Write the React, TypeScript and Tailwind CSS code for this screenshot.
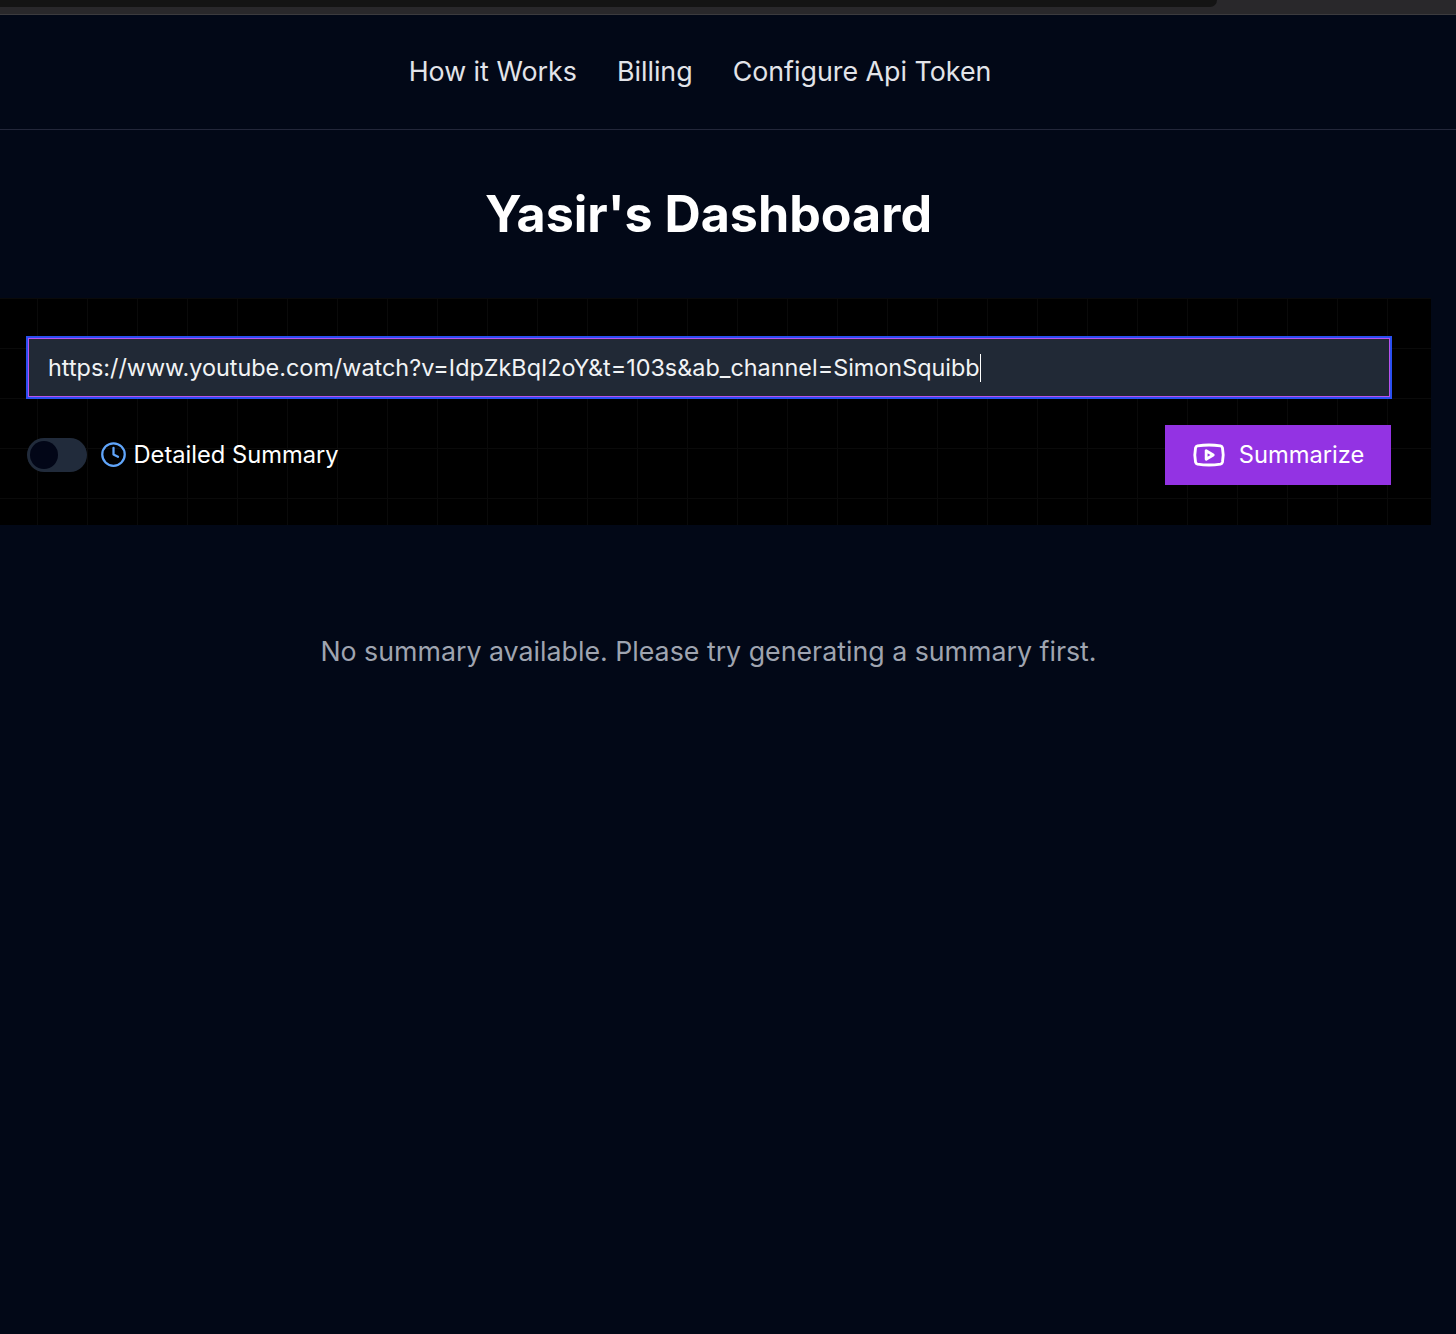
import { Clock, Youtube } from "lucide-react";

const navLinks = ["How it Works", "Billing", "Configure Api Token"];

function BrowserEdge() {
  return (
    <div className="h-[15px] bg-[#29282b] border-b border-[#3c3b3e]">
      <div className="h-[7px] w-[1217px] bg-[#141414] rounded-br-lg" />
    </div>
  );
}

function Nav() {
  return (
    <nav className="h-[115px] pb-px border-b border-[#23273a]">
      <ul className="w-[1400px] h-full flex items-center justify-center gap-[40px] text-[26.8px] text-[#e2e4e9]">
        {navLinks.map((link) => (
          <li key={link}>{link}</li>
        ))}
      </ul>
    </nav>
  );
}

function SummaryForm() {
  return (
    <section className="w-[1431px] h-[227px] bg-black bg-[linear-gradient(to_right,#0a0a0a_1px,transparent_1px),linear-gradient(to_bottom,#0a0a0a_1px,transparent_1px)] bg-[size:50px_50px] bg-[position:37px_0px] pl-[26px] pt-[38px]">
      <div className="w-[1366px] h-[63px] border-2 border-[#2a4ff0] bg-[#212936]">
        <div className="h-full border border-[#b851f0] pl-[19px] flex items-center text-[23.4px] text-[#f1f3f5]">
          <span>https://www.youtube.com/watch?v=IdpZkBqI2oY&amp;t=103s&amp;ab_channel=SimonSquibb</span>
          <span className="w-px h-7 bg-white" />
        </div>
      </div>
      <div className="w-[1365px] mt-[26px] flex items-center justify-between">
        <div className="flex items-center">
          <div className="ml-px w-[60px] h-[34px] rounded-full bg-[#212b3b] p-[3px]">
            <div className="w-7 h-7 rounded-full bg-[#020617]" />
          </div>
          <Clock className="ml-[13px] w-[27px] h-[27px] text-[#60a5fa]" strokeWidth={2} />
          <span className="ml-[6.5px] text-[23.7px] text-white">Detailed Summary</span>
        </div>
        <button className="w-[226px] h-[60px] bg-[#9333e3] text-white text-[23.7px] flex items-center justify-center gap-[13px]">
          <Youtube className="w-[34px] h-[34px]" strokeWidth={2} />
          Summarize
        </button>
      </div>
    </section>
  );
}

export default function App() {
  return (
    <div className="min-h-[1334px] bg-[#020817] font-['Inter',sans-serif] overflow-hidden">
      <BrowserEdge />
      <Nav />
      <h1 className="w-[1417px] mt-[50px] mb-[50px] text-center text-[50.2px] leading-[68px] font-bold text-white">
        Yasir's Dashboard
      </h1>
      <SummaryForm />
      <p className="w-[1417px] mt-[108px] text-center text-[26.75px] leading-9 text-[#9fa4b0]">
        No summary available. Please try generating a summary first.
      </p>
    </div>
  );
}
